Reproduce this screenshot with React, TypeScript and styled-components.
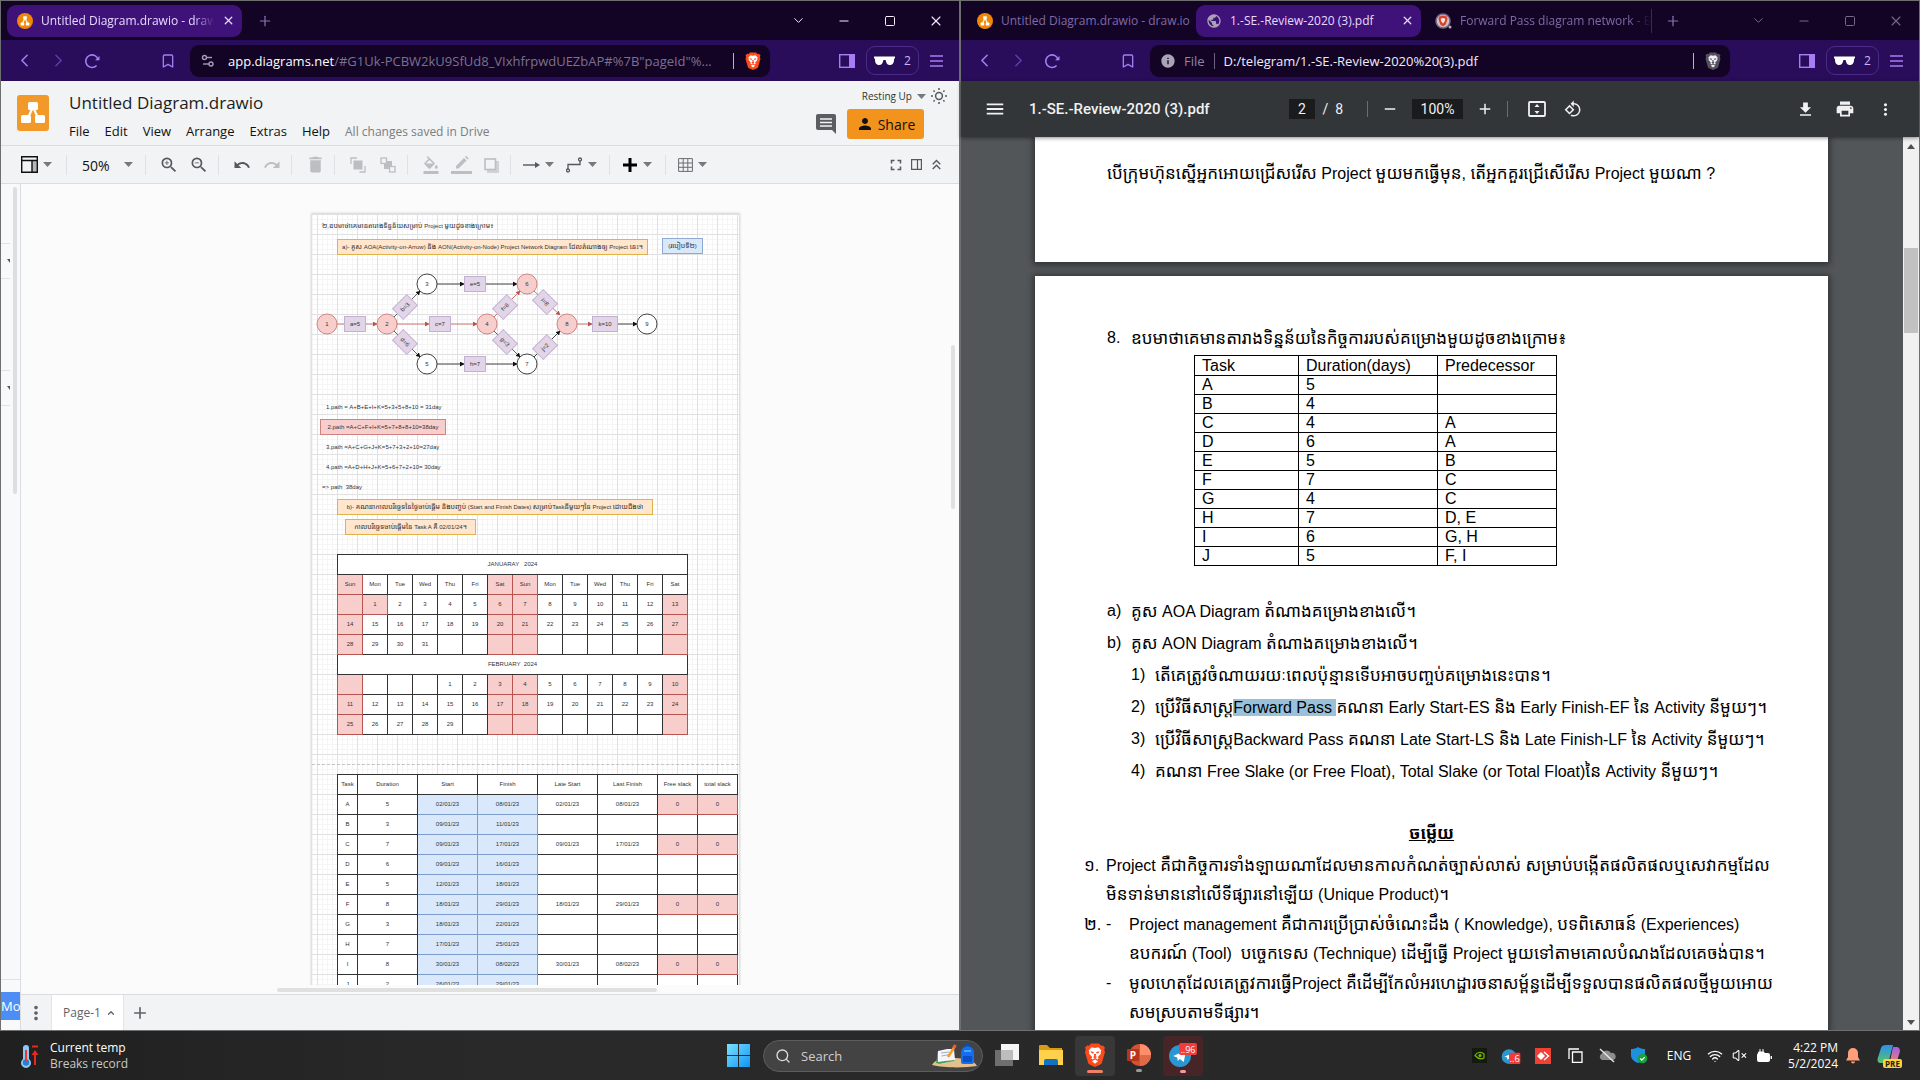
import React from "react";
import styled, { createGlobalStyle, css } from "styled-components";
import {
  MdZoomIn, MdZoomOut, MdUndo, MdRedo, MdDelete, MdFormatColorFill, MdPrint,
  MdFileDownload, MdRotate90DegreesCcw, MdMoreVert, MdMenu, MdAdd, MdRemove,
  MdFullscreen, MdKeyboardDoubleArrowUp, MdPerson, MdInfo, MdPublic,
} from "react-icons/md";
import { ChevronLeft, ChevronRight, ChevronDown, ChevronUp, Plus, Minus, X, Square, Bookmark, Wifi, VolumeX, Search } from "lucide-react";

const ui = `"Open Sans", "Noto Sans", sans-serif`;
const arial = `"Liberation Sans", "Noto Sans Khmer", "Khmer OS", sans-serif`;
const khmer = `"Khmer OS Content", "Khmer OS", "Noto Sans Khmer", "Liberation Sans", sans-serif`;

const GlobalStyle = createGlobalStyle`
  * { box-sizing: border-box; }
  html, body, #root { height: 100%; margin: 0; }
  body { font-family: ${ui}; overflow: hidden; background: #262626; }
  button, input, select { font: inherit; color: inherit; margin: 0; padding: 0; border: 0; background: none; outline: none; }
  button { display: inline-flex; align-items: center; justify-content: center; cursor: pointer; }
  svg { display: block; flex: none; }
`;

/* ---------- Shell ---------- */
const Desktop = styled.div`
  display: grid;
  grid-template-rows: minmax(0, 1fr) 49px;
  height: 100vh;
`;
const Windows = styled.div`
  display: grid;
  grid-template-columns: 1fr 1fr;
  min-height: 0;
`;
const Window = styled.section`
  display: flex;
  flex-direction: column;
  min-width: 0;
  min-height: 0;
  border: 1px solid #6f6f6f;
  background: #fff;
`;

/* ---------- Browser chrome ---------- */
const TabStrip = styled.div`
  display: flex;
  align-items: center;
  height: 39px;
  flex: none;
  padding-left: 6px;
  background: #130426;
  color: #8b74b4;
`;
const Tab = styled.div<{ $active?: boolean; $w: number }>`
  display: flex;
  align-items: center;
  gap: 8px;
  width: ${(p) => p.$w}px;
  height: 32px;
  padding: 0 ${(p) => (p.$active ? 7 : 0)}px 0 10px;
  border-radius: 9px;
  font-size: 12px;
  color: ${(p) => (p.$active ? "#e6daff" : "#7f6aa6")};
  background: ${(p) => (p.$active ? "#3f1279" : "transparent")};
`;
const TabTitle = styled.span<{ $fade?: boolean }>`
  flex: 1;
  min-width: 0;
  overflow: hidden;
  white-space: nowrap;
  ${(p) => p.$fade && css`mask-image: linear-gradient(90deg, #000 88%, transparent);`}
`;
const IconButton = styled.button<{ $w?: number; $h?: number; $c?: string }>`
  width: ${(p) => p.$w ?? 30}px;
  height: ${(p) => p.$h ?? 30}px;
  color: ${(p) => p.$c ?? "inherit"};
  flex: none;
`;
const TabDivider = styled.span`
  width: 1px;
  height: 24px;
  background: #3c2a55;
`;
const Spacer = styled.span`
  flex: 1;
`;
const WindowButtons = styled.div<{ $dim?: boolean }>`
  display: flex;
  color: ${(p) => (p.$dim ? "#75688a" : "#f2ecfb")};
`;
const NavBar = styled.div`
  display: flex;
  align-items: center;
  height: 41px;
  flex: none;
  padding: 0 9px 0 6px;
  background: #2a0d5a;
  color: #a77cf5;
`;
const Gap = styled.span<{ $w: number }>`
  width: ${(p) => p.$w}px;
  flex: none;
`;
const AddressBar = styled.div`
  display: flex;
  align-items: center;
  flex: 1;
  min-width: 0;
  height: 32px;
  margin-right: 62px;
  padding: 0 8px 0 10px;
  border-radius: 9px;
  background: #130426;
  color: #8e86a0;
  font-size: 13px;
`;
const Address = styled.div`
  flex: 1;
  min-width: 0;
  margin-left: 12px;
  white-space: nowrap;
  color: #7b728d;
  b { font-weight: 400; color: #fff; }
`;
const AddressInput = styled.input`
  flex: 1;
  min-width: 0;
  color: #f0ebf8;
`;
const Rule = styled.span<{ $c?: string; $m?: number }>`
  width: 1px;
  height: 16px;
  margin: 0 ${(p) => p.$m ?? 9}px;
  background: ${(p) => p.$c ?? "#b9b3c4"};
`;
const PrivateChip = styled.button`
  gap: 9px;
  width: 53px;
  height: 29px;
  margin: 0 3px 0 4px;
  border: 1px solid #4a2a86;
  border-radius: 9px;
  font-size: 12px;
  color: #cdb4ff;
`;

const BraveLion = ({ size, shield, face, mane }: { size: number; shield: string; face: string; mane: string }) => (
  <svg width={size} height={size} viewBox="0 0 24 24">
    <path d="M8 .5h8l2 2.200 2-.3 2 2.400-.8 2 .8 2.300-3 10.400c-.3 1-.9 1.500-1.600 2L12 24l-5.400-2.500c-.7-.5-1.300-1-1.600-2L2 9.100l.8-2.300-.8-2 2-2.400 2 .3z" fill={shield} />
    <path d="M8.600 4.300 12 4.900l3.400-.6 2.900 3.300-.7 1.700.3 1.400-3 3.300.7 1.600-.9.900-2.700-1.500-2.700 1.500-.9-.9.7-1.600-3-3.300.300-1.400-.7-1.700z" fill={face} />
    <path d="m9 18.200 3-1.700 3 1.700-3 2.500z" fill={face} />
    <path d="m7.300 8.300 3.500.6-.4 1.500-1.700-.2zM16.700 8.300l-3.500.6.400 1.500 1.700-.2zM10 14l1.300-.8-.5-2.200h2.400l-.5 2.200 1.300.8-2 1.500z" fill={mane} />
  </svg>
);
const DrawioBadge = () => (
  <svg width="16" height="16" viewBox="0 0 16 16">
    <circle cx="8" cy="8" r="8" fill="#f08705" />
    <path d="M8 5 5.6 10.5M8 5l2.4 5.5" stroke="#fff" strokeWidth="1.1" />
    <rect x="6.2" y="3.2" width="3.6" height="3" rx=".5" fill="#fff" />
    <rect x="3.6" y="9.4" width="3.6" height="3" rx=".5" fill="#fff" />
    <rect x="8.8" y="9.4" width="3.6" height="3" rx=".5" fill="#fff" />
  </svg>
);
const BraveSearchBadge = () => (
  <svg width="17" height="16" viewBox="0 0 17 16">
    <circle cx="8" cy="8" r="7" fill="#cfc3cb" stroke="#77697f" strokeWidth="1.500" />
    <path d="m8 2.500 3.800 1 .7 2.500-1.700 5.500L8 13.600l-2.800-2.100L3.500 6l.7-2.500z" fill="#d8432a" />
    <path d="m8 5 2.400.8-.8 2.800L8 10.500 6.400 8.600l-.8-2.800z" fill="#efe6ea" />
    <circle cx="15" cy="14" r="1.500" fill="#b8aec4" />
  </svg>
);
const ReloadIcon = () => (
  <svg width="16" height="16" viewBox="0 0 16 16" fill="none" stroke="currentColor" strokeWidth="1.6">
    <path d="M12.600 12.500A6.300 6.300 0 1 1 14.200 7" />
    <path d="M11 7.200h4.500V3z" fill="currentColor" stroke="none" />
  </svg>
);
const TuneIcon = () => (
  <svg width="16" height="16" viewBox="0 0 16 16" fill="none" stroke="#a39bb3" strokeWidth="1.4">
    <circle cx="4.500" cy="4.500" r="2" /><path d="M6.500 4.500H12" />
    <circle cx="11" cy="11" r="2" /><path d="M3 11h6" />
  </svg>
);
const PanelIcon = () => (
  <svg width="16" height="14" viewBox="0 0 16 14">
    <rect x=".7" y=".7" width="14.600" height="12.600" fill="none" stroke="#a77cf5" strokeWidth="1.4" />
    <rect x="10" y="1" width="5" height="12" fill="#a77cf5" />
  </svg>
);
const GlassesIcon = () => (
  <svg width="21" height="10" viewBox="0 0 21 10" fill="#fff">
    <path d="M0 .5h21v1.700l-.9.5c0 3.800-1.200 6.300-4.200 6.300-2.700 0-3.700-2-4.300-5h-2.200c-.6 3-1.600 5-4.300 5C2.100 9 .9 6.500.9 2.700L0 2.200z" />
  </svg>
);
const PillMenu = () => (
  <svg width="13" height="12" viewBox="0 0 13 12" stroke="currentColor" strokeWidth="1.500">
    <path d="M0 1h13M0 6h13M0 11h13" />
  </svg>
);

const WinControls = ({ dim }: { dim?: boolean }) => (
  <WindowButtons $dim={dim}>
    <IconButton $w={46} aria-label="Search tabs"><ChevronDown size={15} strokeWidth={1.6} /></IconButton>
    <IconButton $w={46} aria-label="Minimize"><Minus size={14} strokeWidth={1.8} /></IconButton>
    <IconButton $w={46} aria-label="Maximize"><Square size={12} strokeWidth={2} /></IconButton>
    <IconButton $w={46} aria-label="Close"><X size={16} strokeWidth={1.6} /></IconButton>
  </WindowButtons>
);

const Nav = ({ children, quiet }: { children: React.ReactNode; quiet?: boolean }) => (
  <NavBar>
    <IconButton $w={34} aria-label="Back"><ChevronLeft size={21} strokeWidth={1.8} /></IconButton>
    <IconButton $w={34} aria-label="Forward" $c="#6239a6"><ChevronRight size={21} strokeWidth={1.8} /></IconButton>
    <IconButton $w={34} aria-label="Reload"><ReloadIcon /></IconButton>
    <Gap $w={42} />
    <IconButton $w={34} aria-label="Bookmark this tab"><Bookmark size={16} strokeWidth={2} /></IconButton>
    <Gap $w={5} />
    <AddressBar>
      {children}
      <Rule $m={0} />
      <Gap $w={10} />
      {quiet
        ? <BraveLion size={18} shield="#55505f" face="#f1eff3" mane="#55505f" />
        : <BraveLion size={18} shield="#fb4a1c" face="#fff" mane="#fb4a1c" />}
    </AddressBar>
    <IconButton aria-label="Side panel"><PanelIcon /></IconButton>
    <PrivateChip><GlassesIcon />2</PrivateChip>
    <IconButton $w={28} aria-label="Menu"><PillMenu /></IconButton>
  </NavBar>
);

const Kh = styled.span<{ $size: number }>`
  font-family: ${khmer};
  font-size: ${(p) => p.$size}px;
`;
/* Text that mixes Latin with Khmer, which is set one size larger. */
const Mixed = ({ t, size = 17 }: { t: string; size?: number }) => (
  <>{t.split(/([\u1780-\u17ff]+)/).map((s, i) => (i % 2 ? <Kh key={i} $size={size}>{s}</Kh> : s))}</>
);

/* ---------- draw.io ---------- */
const DioHeader = styled.header`
  display: flex;
  height: 65px;
  flex: none;
  padding: 0 12px 0 16px;
  background: #f1f3f4;
  border-bottom: 1px solid #dadce0;
`;
const DioLogo = styled.div`
  width: 32px;
  height: 36px;
  margin: 14px 20px 0 0;
  border-radius: 3px;
  background: #f19a2a;
`;
const DioTitles = styled.div`
  flex: 1;
  padding-top: 10px;
`;
const DioTitle = styled.div`
  font-size: 17px;
  line-height: 24px;
  color: #1d1d1d;
`;
const MenuRow = styled.nav`
  display: flex;
  align-items: center;
  gap: 15px;
  height: 32px;
  font-size: 13px;
  color: #111;
`;
const Saved = styled.span`
  font-size: 12px;
  color: #7b7d80;
`;
const DioRight = styled.div`
  display: flex;
  flex-direction: column;
  align-items: flex-end;
`;
const AccountRow = styled.div`
  display: flex;
  align-items: center;
  gap: 5px;
  height: 30px;
  font-size: 10px;
  color: #333;
`;
const ShareRow = styled.div`
  display: flex;
  align-items: center;
  gap: 10px;
  margin-top: -2px;
  padding-right: 23px;
`;
const ShareButton = styled.button`
  gap: 4px;
  width: 77px;
  height: 30px;
  border-radius: 3px;
  background: #f2931e;
  font-size: 14px;
  color: #111;
`;
const DioToolbar = styled.div`
  display: flex;
  align-items: center;
  height: 38px;
  flex: none;
  padding: 0 13px 0 8px;
  background: #f1f3f4;
  border-bottom: 1px solid #dadce0;
  color: #55585c;
`;
const ToolGroup = styled.div<{ $last?: boolean; $dim?: boolean }>`
  display: flex;
  align-items: center;
  height: 20px;
  padding: 0 4px 0 8px;
  border-right: ${(p) => (p.$last ? 0 : 1)}px solid #dfe1e4;
  color: ${(p) => (p.$dim ? "#bcbec1" : "inherit")};
`;
const CaretButton = styled.button`
  justify-content: flex-start;
  gap: 5px;
  width: 43px;
  height: 30px;
  padding-left: 4px;
`;
const ZoomPicker = styled.label`
  display: grid;
  grid-template-columns: 66px;
  align-items: center;
  svg { grid-area: 1 / 1; justify-self: end; margin-right: 8px; pointer-events: none; }
`;
const ZoomSelect = styled.select`
  grid-area: 1 / 1;
  appearance: none;
  width: 100%;
  padding: 2px 0 0 7px;
  font-size: 14px;
  color: #111;
`;
const Caret = () => (
  <svg width="9" height="5" viewBox="0 0 9 5" fill="#77797c"><path d="M0 0h9L4.500 5z" /></svg>
);
const DioBody = styled.div`
  display: grid;
  grid-template-columns: 20px minmax(0, 1fr);
  flex: 1;
  min-height: 0;
`;
const ShapesPane = styled.aside`
  display: flex;
  flex-direction: column;
  justify-content: space-between;
  min-width: 0;
  overflow: hidden;
  background: #f8f9fa;
  border-right: 1px solid #dadce0;
`;
const ShapesUpper = styled.div`
  display: grid;
  grid-template-columns: 9px 1fr;
`;
const PaneSections = styled.div`
  display: flex;
  flex-direction: column;
`;
const PaneSection = styled.div<{ $h: number }>`
  display: flex;
  align-items: center;
  justify-content: flex-end;
  height: ${(p) => p.$h}px;
  border-bottom: 1px solid #e0e2e4;
`;
const PaneScroll = styled.div`
  width: 4px;
  height: 307px;
  margin: 3px 0 0 3px;
  border-radius: 2px;
  background: #dcdee1;
`;
const ShapesLower = styled.div`
  display: flex;
  flex-direction: column;
  padding: 12px 0 10px;
  border-top: 1px solid #e0e2e4;
`;
const MoreShapes = styled.button`
  justify-content: flex-start;
  height: 28px;
  background: #4d8df6;
  color: #fff;
  font-size: 13px;
  white-space: nowrap;
`;
const DioMain = styled.div`
  display: flex;
  flex-direction: column;
  min-width: 0;
  min-height: 0;
`;
const CanvasRow = styled.div`
  display: grid;
  grid-template-columns: minmax(0, 1fr) 13px;
  flex: 1;
  min-height: 0;
  background: #fbfbfb;
`;
const CanvasView = styled.div`
  display: flex;
  min-height: 0;
  overflow: hidden;
  padding: 30px 0 0 291px;
`;
const VThumb = styled.div`
  width: 4px;
  height: 164px;
  margin: 161px 0 0 5px;
  border-radius: 2px;
  background: #e0e0e0;
`;
const HScroll = styled.div`
  display: flex;
  height: 10px;
  flex: none;
  align-items: center;
  padding-left: 256px;
  background: #fbfbfb;
  border-bottom: 1px solid #dadce0;
`;
const HThumb = styled.div`
  width: 380px;
  height: 4px;
  border-radius: 2px;
  background: #e0e0e0;
`;
const Sheet = styled.div`
  position: relative;
  width: 427px;
  height: 1100px;
  flex: none;
  background-color: #fff;
  background-image:
    linear-gradient(90deg, #e1e1e1 1px, transparent 1px),
    linear-gradient(#e1e1e1 1px, transparent 1px),
    linear-gradient(90deg, #f5f5f5 1px, transparent 1px),
    linear-gradient(#f5f5f5 1px, transparent 1px);
  background-size: 20px 20px, 20px 20px, 5px 5px, 5px 5px;
  background-position: 5px 0, 0 0, 0 0, 0 0;
  box-shadow: 0 0 2px 1px #d3d3d3;
  font-family: ${arial};
  font-size: 6px;
  color: #333;
`;
/* An item dropped freely on the drawing sheet. */
const OnSheet = styled.div<{ $x: number; $y: number }>`
  position: absolute;
  left: ${(p) => p.$x}px;
  top: ${(p) => p.$y}px;
`;
const tones = {
  orange: ["#ffe6cc", "#dfb24a"],
  blue: ["#dae8fc", "#8faad1"],
  red: ["#f8cecc", "#cf8380"],
  none: ["transparent", "transparent"],
};
const NoteBox = styled(OnSheet)<{ $w: number; $tone: keyof typeof tones }>`
  display: flex;
  align-items: center;
  justify-content: ${(p) => (p.$tone === "none" ? "flex-start" : "center")};
  width: ${(p) => p.$w}px;
  height: 16px;
  padding: 0 4px;
  line-height: 14px;
  white-space: pre;
  background: ${(p) => tones[p.$tone][0]};
  border: 1px solid ${(p) => tones[p.$tone][1]};
`;
const Note = ({ x, y, w, tone = "none", t }: { x: number; y: number; w: number; tone?: keyof typeof tones; t: string }) => (
  <NoteBox $x={x} $y={y} $w={w} $tone={tone}><span><Mixed size={7} t={t} /></span></NoteBox>
);
const PageBreak = styled(OnSheet)`
  width: 427px;
  border-top: 1px dashed #c4c4c4;
`;
const SheetTable = styled.table`
  border-collapse: collapse;
  table-layout: fixed;
  background: #fff;
  text-align: center;
  td, th { height: 20px; padding: 0 0 2px; font-weight: 400; line-height: 8px; white-space: pre; border: 1px solid #333; }
`;
const Cell = styled.td<{ $fill?: "red" | "blue" }>`
  ${(p) => p.$fill === "red" && css`&& { background: #f8cecc; border-color: #b85450; }`}
  ${(p) => p.$fill === "blue" && css`&& { background: #dae8fc; border-color: #7c9ccc; }`}
`;

const red = "#b85450";
const nodes: [string, number, number, boolean][] = [
  ["1", 15, 110, true], ["2", 75, 110, true], ["3", 115, 70, false], ["5", 115, 150, false],
  ["4", 175, 110, true], ["6", 215, 70, true], ["7", 215, 150, false], ["8", 255, 110, true], ["9", 335, 110, false],
];
const edges: [number, number, number, number, string][] = [
  [25, 110, 65, 110, red], [85, 110, 117, 110, red], [138, 110, 165, 110, red],
  [125, 70, 152, 70, "#111"], [173, 70, 205, 70, "#111"], [125, 150, 152, 150, "#111"], [173, 150, 205, 150, "#111"],
  [82, 103, 108, 77, "#333"], [82, 117, 108, 143, "#333"], [182, 103, 208, 77, red], [182, 117, 208, 143, "#333"],
  [222, 77, 248, 101, red], [222, 143, 248, 117, "#111"], [265, 110, 280, 110, red], [305, 110, 325, 110, "#111"],
];
const labels: [string, number, number, number, number][] = [
  ["a=5", 43, 110, 21, 0], ["c=7", 128, 110, 21, 0], ["e=5", 163, 70, 21, 0], ["h=7", 163, 150, 21, 0], ["k=10", 293, 110, 25, 0],
  ["b=3", 93, 93, 20, -45], ["d=6", 93, 128, 20, 45], ["f=8", 193, 93, 20, -45], ["g=3", 193, 128, 20, 45],
  ["i=8", 233, 88, 20, 45], ["j=2", 233, 133, 20, -45],
];
const Network = () => (
  <svg width="360" height="170" viewBox="0 0 360 170" fontSize="6" textAnchor="middle">
    <defs>
      {[["r", red], ["k", "#111"]].map(([id, c]) => (
        <marker key={id} id={`tip-${id}`} markerUnits="userSpaceOnUse" markerWidth="5" markerHeight="5" refX="4" refY="2.500" orient="auto">
          <path d="M0 0 4.500 2.500 0 5z" fill={c} />
        </marker>
      ))}
    </defs>
    {edges.map(([a, b, c, d, s], i) => (
      <line key={i} x1={a} y1={b} x2={c} y2={d} stroke={s} strokeWidth=".8" markerEnd={`url(#tip-${s === red ? "r" : "k"})`} />
    ))}
    {nodes.map(([t, x, y, hot]) => (
      <g key={t}>
        <circle cx={x} cy={y} r="10" fill={hot ? "#f8cecc" : "#fff"} stroke={hot ? "#d08683" : "#444"} />
        <text x={x} y={y + 2} fill="#333">{t}</text>
      </g>
    ))}
    {labels.map(([t, x, y, w, r]) => (
      <g key={t} transform={`translate(${x} ${y}) rotate(${r})`}>
        <rect x={-w / 2} y="-7.500" width={w} height="15" fill="#e1d5e7" stroke="#c3b1d0" />
        <text y="2" fill="#333">{t}</text>
      </g>
    ))}
  </svg>
);

const jan = [
  ["Sun", "Mon", "Tue", "Wed", "Thu", "Fri", "Sat", "Sun", "Mon", "Tue", "Wed", "Thu", "Fri", "Sat"],
  ["", "1", "2", "3", "4", "5", "6", "7", "8", "9", "10", "11", "12", "13"],
  ["14", "15", "16", "17", "18", "19", "20", "21", "22", "23", "24", "25", "26", "27"],
  ["28", "29", "30", "31", "", "", "", "", "", "", "", "", "", ""],
];
const feb = [
  ["", "", "", "", "1", "2", "3", "4", "5", "6", "7", "8", "9", "10"],
  ["11", "12", "13", "14", "15", "16", "17", "18", "19", "20", "21", "22", "23", "24"],
  ["25", "26", "27", "28", "29", "", "", "", "", "", "", "", "", ""],
];
const isOff = (block: string, r: number, c: number) =>
  [0, 6, 7].includes(c) || (c === 13 && !(block === "jan" && r === 0)) || (block === "jan" && r === 1 && c === 1);
const MonthRows = ({ id, title, rows }: { id: string; title: string; rows: string[][] }) => (
  <tbody>
    <tr><th colSpan={14}>{title}</th></tr>
    {rows.map((row, r) => (
      <tr key={r}>{row.map((v, c) => <Cell key={c} $fill={isOff(id, r, c) ? "red" : undefined}>{v}</Cell>)}</tr>
    ))}
  </tbody>
);
const CalendarTable = styled(SheetTable)`
  width: 351px;
`;
const ScheduleTable = styled(SheetTable)`
  width: 401px;
`;
const schedule = [
  ["A", "5", "02/01/23", "08/01/23", "02/01/23", "08/01/23", "0", "0"],
  ["B", "3", "09/01/23", "11/01/23", "", "", "", ""],
  ["C", "7", "09/01/23", "17/01/23", "09/01/23", "17/01/23", "0", "0"],
  ["D", "6", "09/01/23", "16/01/23", "", "", "", ""],
  ["E", "5", "12/01/23", "18/01/23", "", "", "", ""],
  ["F", "8", "18/01/23", "29/01/23", "18/01/23", "29/01/23", "0", "0"],
  ["G", "3", "18/01/23", "22/01/23", "", "", "", ""],
  ["H", "7", "17/01/23", "25/01/23", "", "", "", ""],
  ["I", "8", "30/01/23", "08/02/23", "30/01/23", "08/02/23", "0", "0"],
  ["J", "2", "26/01/23", "29/01/23", "", "", "", ""],
];
const scheduleCols = [20, 60, 60, 60, 60, 60, 40, 40];
const Col = styled.col<{ $w: number }>`
  width: ${(p) => p.$w}px;
`;
const fillFor = (v: string, c: number) => (c === 2 || c === 3 ? "blue" : c > 5 && v ? "red" : undefined);

const DioFooter = styled.footer`
  display: flex;
  align-items: center;
  height: 35px;
  flex: none;
  background: #f1f3f4;
  color: #5f6368;
`;
const PageTab = styled.button`
  gap: 5px;
  width: 73px;
  height: 35px;
  padding-left: 4px;
  background: #fff;
  border: solid #e2e4e6;
  border-width: 0 1px;
  font-size: 12px;
`;

const OrderIcon = ({ back }: { back?: boolean }) => (
  <svg width="16" height="16" viewBox="0 0 16 16" fill="none" stroke="currentColor" strokeWidth="1.300">
    {back ? (
      <><rect x="4" y="4" width="8" height="8" fill="currentColor" stroke="none" /><rect x="1" y="1" width="5.500" height="5.500" fill="#f1f3f4" /><rect x="9.500" y="9.500" width="5.500" height="5.500" fill="#f1f3f4" /></>
    ) : (
      <><rect x="3.500" y="3.500" width="9" height="9" fill="currentColor" stroke="none" /><path d="M7 1H1v6M9.500 15H15V9" /></>
    )}
  </svg>
);
const PenIcon = () => (
  <svg width="21" height="20" viewBox="0 0 21 20" fill="currentColor">
    <path d="m5 11 8-8 2.600 2.600-8 8H5zM14 2l1.200-1.200 2.600 2.600L16.600 4.600zM0 16h21v3H0z" />
  </svg>
);

const DioWindow = () => (
  <Window>
    <TabStrip>
      <Tab $active $w={235}>
        <DrawioBadge />
        <TabTitle $fade>Untitled Diagram.drawio - draw.</TabTitle>
        <X size={13} strokeWidth={2.4} />
      </Tab>
      <IconButton $w={46} aria-label="New tab"><Plus size={16} strokeWidth={1.8} /></IconButton>
      <Spacer />
      <WinControls />
    </TabStrip>
    <Nav>
      <TuneIcon />
      <Address><b>app.diagrams.net</b>/#G1Uk-PCBW2kU9SfUd8_VIxhfrpwdUEZbAP#%7B"pageId"%...</Address>
    </Nav>
    <DioHeader>
      <DioLogo>
        <svg width="32" height="36" viewBox="0 0 32 36">
          <path d="m16 12-6 13M16 12l6 13" stroke="#fff" strokeWidth="2.200" />
          <rect x="11" y="7" width="10" height="8" rx="1.500" fill="#fff" />
          <rect x="4" y="20" width="10" height="8" rx="1.500" fill="#fff" />
          <rect x="18" y="20" width="10" height="8" rx="1.500" fill="#fff" />
        </svg>
      </DioLogo>
      <DioTitles>
        <DioTitle>Untitled Diagram.drawio</DioTitle>
        <MenuRow>
          {["File", "Edit", "View", "Arrange", "Extras", "Help"].map((m) => <button key={m}>{m}</button>)}
          <Saved>All changes saved in Drive</Saved>
        </MenuRow>
      </DioTitles>
      <DioRight>
        <AccountRow>
          Resting Up <Caret />
          <svg width="16" height="16" viewBox="0 0 16 16" fill="none" stroke="#55585c" strokeWidth="1.500">
            <circle cx="8" cy="8" r="3.400" />
            <path d="M8 0v2M8 14v2M0 8h2M14 8h2M2.500 2.500l1.200 1.200M12.300 12.300l1.200 1.200M2.500 13.500l1.200-1.200M12.300 3.700l1.200-1.200" />
          </svg>
        </AccountRow>
        <ShareRow>
          <IconButton $w={22} aria-label="Comments">
            <svg width="20" height="20" viewBox="0 0 20 20">
              <path d="M2 0h16a2 2 0 0 1 2 2v18l-4-4H2a2 2 0 0 1-2-2V2a2 2 0 0 1 2-2z" fill="#5a5d61" />
              <path d="M4 5h12M4 8.500h12M4 12h12" stroke="#f1f3f4" strokeWidth="1.600" />
            </svg>
          </IconButton>
          <ShareButton><MdPerson size={18} />Share</ShareButton>
        </ShareRow>
      </DioRight>
    </DioHeader>
    <DioToolbar>
      <ToolGroup>
        <CaretButton aria-label="Panels">
          <svg width="17" height="17" viewBox="0 0 17 17">
            <rect x="11" y="5" width="5" height="11" fill="#b5b7b9" />
            <path d="M.7.700h15.600v15.600H.7zM.7 4.500h15.600M11 4.500v12" fill="none" stroke="#111" strokeWidth="1.400" />
          </svg>
          <Caret />
        </CaretButton>
        <Gap $w={2} />
      </ToolGroup>
      <ToolGroup>
        <ZoomPicker>
          <ZoomSelect aria-label="Zoom" defaultValue="50%"><option>50%</option><option>100%</option></ZoomSelect>
          <Caret />
        </ZoomPicker>
      </ToolGroup>
      <ToolGroup>
        <IconButton aria-label="Zoom in"><MdZoomIn size={20} /></IconButton>
        <IconButton aria-label="Zoom out"><MdZoomOut size={20} /></IconButton>
      </ToolGroup>
      <ToolGroup>
        <IconButton aria-label="Undo"><MdUndo size={18} /></IconButton>
        <IconButton aria-label="Redo" $c="#bcbec1"><MdRedo size={18} /></IconButton>
      </ToolGroup>
      <ToolGroup $dim><IconButton aria-label="Delete"><MdDelete size={21} /></IconButton></ToolGroup>
      <ToolGroup $dim>
        <IconButton aria-label="To front"><OrderIcon /></IconButton>
        <IconButton aria-label="To back"><OrderIcon back /></IconButton>
      </ToolGroup>
      <ToolGroup $dim>
        <IconButton aria-label="Fill colour"><MdFormatColorFill size={18} /></IconButton>
        <IconButton aria-label="Line colour"><PenIcon /></IconButton>
        <IconButton aria-label="Shadow">
          <svg width="16" height="16" viewBox="0 0 16 16"><path d="M4 4h12v12H4z" fill="#d0d2d4" /><rect x="2" y="2" width="10.500" height="10.500" fill="#f1f3f4" stroke="#bcbec1" strokeWidth="1.600" /></svg>
        </IconButton>
      </ToolGroup>
      <ToolGroup>
        <CaretButton aria-label="Connection">
          <svg width="17" height="8" viewBox="0 0 17 8"><path d="M0 4h13" stroke="#55585c" strokeWidth="1.400" /><path d="m12 1 5 3-5 3z" fill="#55585c" /></svg>
          <Caret />
        </CaretButton>
        <CaretButton aria-label="Waypoints">
          <svg width="17" height="16" viewBox="0 0 17 16" fill="none" stroke="#55585c" strokeWidth="1.300"><path d="M2 12V7.500h12V4" /><circle cx="2" cy="13.500" r="1.500" /><circle cx="14" cy="2.500" r="1.500" /></svg>
          <Caret />
        </CaretButton>
      </ToolGroup>
      <ToolGroup>
        <CaretButton aria-label="Insert">
          <svg width="16" height="14" viewBox="0 0 16 14"><path d="M8 0v14M1 7h14" stroke="#000" strokeWidth="3" /></svg>
          <Caret />
        </CaretButton>
      </ToolGroup>
      <ToolGroup $last>
        <CaretButton aria-label="Table">
          <svg width="15" height="14" viewBox="0 0 15 14"><path d="M.6.600h13.800v12.800H.6zM.6 5h13.800M.6 9.300h13.800M5.200.600v12.800M9.800.600v12.800" fill="none" stroke="#6a6d70" /></svg>
          <Caret />
        </CaretButton>
      </ToolGroup>
      <Spacer />
      <IconButton $w={20} aria-label="Fullscreen"><MdFullscreen size={18} /></IconButton>
      <IconButton $w={20} aria-label="Format">
        <svg width="11" height="11" viewBox="0 0 11 11"><path d="M.6.600h9.800v9.800H.6zM6.500.600v9.800" fill="none" stroke="#55585c" strokeWidth="1.200" /></svg>
      </IconButton>
      <IconButton $w={20} aria-label="Collapse"><MdKeyboardDoubleArrowUp size={17} /></IconButton>
    </DioToolbar>
    <DioBody>
      <ShapesPane>
        <ShapesUpper>
          <PaneSections>
            <PaneSection $h={60} />
            <PaneSection $h={35}><svg width="3" height="4" viewBox="0 0 3 4"><path d="M0 0h3v4z" fill="#55585c" /></svg></PaneSection>
            <PaneSection $h={92} />
            <PaneSection $h={35}><svg width="3" height="4" viewBox="0 0 3 4"><path d="M0 0h3v4z" fill="#55585c" /></svg></PaneSection>
          </PaneSections>
          <PaneScroll />
        </ShapesUpper>
        <ShapesLower><MoreShapes>Mor</MoreShapes></ShapesLower>
      </ShapesPane>
      <DioMain>
        <CanvasRow>
          <CanvasView>
            <Sheet>
              <Note x={5} y={4} w={200} t="២,ឧបមាថាគេមានតារាងទិន្នន័យសម្រាប់ Project មួយដូចខាងក្រោម៖" />
              <Note x={25} y={25} w={311} tone="orange" t="a)- គូស AOA(Activity-on-Arrow) និង AON(Activity-on-Node) Project Network Diagram ដែលតំណាងឲ្យ Project នេះ។" />
              <Note x={350} y={24} w={41} tone="blue" t="(របៀបទី២)" />
              <OnSheet $x={0} $y={0}><Network /></OnSheet>
              <Note x={9} y={185} w={126} t="1.path = A+B+E+I+K=5+3+5+8+10 = 31day" />
              <Note x={8} y={205} w={126} tone="red" t="2.path =A+C+F+I+K=5+7+8+8+10=38day" />
              <Note x={9} y={225} w={126} t="3.path =A+C+G+J+K=5+7+3+2+10=27day" />
              <Note x={9} y={245} w={126} t="4.path =A+D+H+J+K=5+6+7+2+10= 30day" />
              <Note x={5} y={265} w={60} t="=> path  38day" />
              <Note x={25} y={285} w={316} tone="orange" t="b)- គណនាកាលបរិច្ឆេទនៃថ្ងៃចាប់ផ្ដើម និងបញ្ចប់ (Start and Finish Dates) សម្រាប់Taskនីមួយៗនៃ Project ដោយដឹងថា" />
              <Note x={33} y={305} w={131} tone="orange" t="កាលបរិច្ឆេទចាប់ផ្ដើមនៃ Task A គឺ 02/01/24។" />
              <OnSheet $x={25} $y={340}>
                <CalendarTable>
                  <MonthRows id="jan" title="JANUARAY   2024" rows={jan} />
                  <MonthRows id="feb" title="FEBRUARY  2024" rows={feb} />
                </CalendarTable>
              </OnSheet>
              <PageBreak $x={0} $y={550} />
              <OnSheet $x={25} $y={560}>
                <ScheduleTable>
                  <colgroup>{scheduleCols.map((w, i) => <Col key={i} $w={w} />)}</colgroup>
                  <thead><tr>{["Task", "Duration", "Start", "Finish", "Late Start", "Last Finish", "Free slack", "total slack"].map((h) => <th key={h}>{h}</th>)}</tr></thead>
                  <tbody>
                    {schedule.map((row) => (
                      <tr key={row[0]}>{row.map((v, c) => <Cell key={c} $fill={fillFor(v, c)}>{v}</Cell>)}</tr>
                    ))}
                  </tbody>
                </ScheduleTable>
              </OnSheet>
            </Sheet>
          </CanvasView>
          <VThumb />
        </CanvasRow>
        <HScroll><HThumb /></HScroll>
        <DioFooter>
          <IconButton $w={30} aria-label="Pages"><MdMoreVert size={22} /></IconButton>
          <PageTab>Page-1 <ChevronUp size={10} strokeWidth={3} /></PageTab>
          <IconButton $w={32} aria-label="Insert page"><Plus size={18} strokeWidth={2.200} /></IconButton>
        </DioFooter>
      </DioMain>
    </DioBody>
  </Window>
);

/* ---------- PDF viewer ---------- */
const PdfBar = styled.header`
  display: flex;
  align-items: center;
  height: 56px;
  flex: none;
  padding: 0 14px 0 10px;
  background: #323639;
  color: #f1f1f1;
  font-family: Roboto, sans-serif;
  font-size: 14px;
  z-index: 1;
  box-shadow: 0 1px 4px rgba(0, 0, 0, 0.45);
`;
const PdfName = styled.span`
  width: 261px;
  padding-left: 10px;
  font-size: 15px;
  font-weight: 500;
`;
const PdfField = styled.input<{ $w: number }>`
  width: ${(p) => p.$w}px;
  height: 20px;
  background: #191b1c;
  text-align: center;
`;
const PageCount = styled.span`
  width: 52px;
  padding-left: 4px;
  white-space: pre;
`;
const PdfView = styled.div`
  display: grid;
  grid-template-columns: minmax(0, 1fr) 16px;
  flex: 1;
  min-height: 0;
  background: #525659;
`;
const PdfScroll = styled.div`
  display: flex;
  flex-direction: column;
  align-items: center;
  gap: 14px;
  min-height: 0;
  overflow: hidden;
  padding-right: 1px;
`;
const Paper = styled.article<{ $end?: boolean }>`
  width: 793px;
  flex: none;
  padding: ${(p) => (p.$end ? "20px 72px 73px" : "46px 40px 60px 49px")};
  background: #fff;
  box-shadow: 0 1px 6px 2px rgba(0, 0, 0, 0.4);
  font-family: ${arial};
  font-size: 16px;
  color: #000;
`;
const PdfTrack = styled.div`
  display: flex;
  flex-direction: column;
  align-items: center;
  background: #f1f1f1;
  padding: 7px 0 5px;
`;
const PdfThumb = styled.div`
  width: 14px;
  height: 85px;
  margin: 99px 0 auto;
  background: #c1c1c1;
`;
const Line = styled.div<{ $indent?: number }>`
  display: grid;
  grid-template-columns: 24px 1fr;
  height: 32px;
  line-height: 32px;
  padding-left: ${(p) => p.$indent ?? 23}px;
  white-space: pre;
`;
const PlainLine = styled.div`
  height: 32px;
  line-height: 32px;
  white-space: pre;
`;
const Questions = styled.div`
  margin: 29px 0 30px;
`;
const TaskTable = styled.table`
  width: 363px;
  margin: 1px 0 0 110px;
  border-collapse: collapse;
  table-layout: fixed;
  th, td { height: 19px; padding: 0 0 0 7px; border: 1px solid #000; text-align: left; font-weight: 400; line-height: 18px; }
  th { height: 20px; line-height: 19px; }
`;
const Heading = styled.h2`
  margin: 0 0 0 -9px;
  height: 33px;
  line-height: 31px;
  text-align: center;
  font-size: 16px;
  font-weight: 700;
  text-decoration: underline;
`;
const Answer = styled.div<{ $dash?: boolean }>`
  display: grid;
  grid-template-columns: ${(p) => (p.$dash ? "22px 23px 1fr" : "22px 1fr")};
  margin-bottom: 1px;
  line-height: 29px;
  white-space: pre;
`;
const AnswerLine = styled.div`
  height: 29px;
`;
const Selected = styled.mark`
  background: #99c1da;
  color: inherit;
`;

const tasks = [
  ["A", "5", ""], ["B", "4", ""], ["C", "4", "A"], ["D", "6", "A"], ["E", "5", "B"],
  ["F", "7", "C"], ["G", "4", "C"], ["H", "7", "D, E"], ["I", "6", "G, H"], ["J", "5", "F, I"],
];
const answers = [
  { mark: "១.", lines: ["Project គឺជាកិច្ចការទាំងឡាយណាដែលមានកាលកំណត់ច្បាស់លាស់ សម្រាប់បង្កើតផលិតផលឬសេវាកម្មដែល", "មិនទាន់មាននៅលើទីផ្សារនៅឡើយ (Unique Product)។"] },
  { mark: "២.", dash: true, lines: ["Project management គឺជាការប្រើប្រាស់ចំណេះដឹង ( Knowledge), បទពិសោធន៍ (Experiences)", "ឧបករណ៍ (Tool)  បច្ចេកទេស (Technique) ដើម្បីធ្វើ Project មួយទៅតាមគោលបំណងដែលគេចង់បាន។"] },
  { mark: "", dash: true, lines: ["មូលហេតុដែលគេត្រូវការធ្វើProject គឺដើម្បីកែលំអរហេដ្ឋារចនាសម្ព័ន្ធដើម្បីទទួលបានផលិតផលថ្មីមួយអោយ", "សមស្របតាមទីផ្សារ។"] },
];

const PdfWindow = () => (
  <Window>
    <TabStrip>
      <Tab $w={229}><DrawioBadge /><TabTitle>Untitled Diagram.drawio - draw.io</TabTitle></Tab>
      <Tab $active $w={225}><MdPublic size={16} color="#a9a3b5" /><TabTitle>1.-SE.-Review-2020 (3).pdf</TabTitle><X size={13} strokeWidth={2.400} /></Tab>
      <Gap $w={4} />
      <Tab $w={226}><BraveSearchBadge /><TabTitle $fade>Forward Pass diagram network - B</TabTitle></Tab>
      <TabDivider />
      <IconButton $w={42} aria-label="New tab"><Plus size={16} strokeWidth={1.800} /></IconButton>
      <Spacer />
      <WinControls dim />
    </TabStrip>
    <Nav quiet>
      <MdInfo size={16} color="#a9a3b5" />
      <Gap $w={8} />File<Rule $c="#6c647b" />
      <AddressInput aria-label="Address" defaultValue="D:/telegram/1.-SE.-Review-2020%20(3).pdf" />
    </Nav>
    <PdfBar>
      <IconButton $w={48} aria-label="Menu"><MdMenu size={22} /></IconButton>
      <PdfName>1.-SE.-Review-2020 (3).pdf</PdfName>
      <Gap $w={9} />
      <PdfField $w={26} aria-label="Page" defaultValue="2" />
      <PageCount>{" /  8"}</PageCount>
      <Rule $m={0} $c="#6b6e70" />
      <IconButton $w={44} aria-label="Zoom out"><MdRemove size={18} /></IconButton>
      <PdfField $w={51} aria-label="Zoom" defaultValue="100%" />
      <IconButton $w={44} aria-label="Zoom in"><MdAdd size={18} /></IconButton>
      <Rule $m={0} $c="#6b6e70" />
      <Gap $w={12} />
      <IconButton $w={34} aria-label="Fit to page">
        <svg width="18" height="16" viewBox="0 0 18 16" fill="none" stroke="#f1f1f1" strokeWidth="1.800"><rect x="1" y="1" width="16" height="14" rx="1" /><path d="M9 3 6.500 6h5zM9 13l2.500-3h-5z" fill="#f1f1f1" stroke="none" /></svg>
      </IconButton>
      <IconButton $w={38} aria-label="Rotate"><MdRotate90DegreesCcw size={18} /></IconButton>
      <Spacer />
      <IconButton $w={40} aria-label="Download"><MdFileDownload size={19} /></IconButton>
      <IconButton $w={40} aria-label="Print"><MdPrint size={20} /></IconButton>
      <IconButton $w={40} aria-label="More"><MdMoreVert size={19} /></IconButton>
    </PdfBar>
    <PdfView>
      <PdfScroll>
        <Paper $end>
          <PlainLine><Mixed t="បើក្រុមហ៊ុនស្នើអ្នកអោយជ្រើសរើស Project មួយមកធ្វើមុន, តើអ្នកគួរជ្រើសើរើស Project មួយណា ?" /></PlainLine>
        </Paper>
        <Paper>
          <Line><span>8.</span><span><Mixed t="ឧបមាថាគេមានតារាងទិន្នន័យនៃកិច្ចការរបស់គម្រោងមួយដូចខាងក្រោម៖" /></span></Line>
          <TaskTable>
            <colgroup><Col $w={104} /><Col $w={139} /><Col $w={119} /></colgroup>
            <thead><tr><th>Task</th><th>Duration(days)</th><th>Predecessor</th></tr></thead>
            <tbody>{tasks.map((r) => <tr key={r[0]}>{r.map((v, i) => <td key={i}>{v}</td>)}</tr>)}</tbody>
          </TaskTable>
          <Questions>
            <Line><span>a)</span><span><Mixed t="គូស AOA Diagram តំណាងគម្រោងខាងលើ។" /></span></Line>
            <Line><span>b)</span><span><Mixed t="គូស AON Diagram តំណាងគម្រោងខាងលើ។" /></span></Line>
            <Line $indent={47}><span>1)</span><span><Mixed t="តើគេត្រូវចំណាយរយៈពេលប៉ុន្មានទើបអាចបញ្ចប់គម្រោងនេះបាន។" /></span></Line>
            <Line $indent={47}><span>2)</span><span><Mixed t="ប្រើវិធីសាស្ត្រ" /><Selected>Forward Pass </Selected><Mixed t="គណនា Early Start-ES និង Early Finish-EF នៃ Activity នីមួយៗ។" /></span></Line>
            <Line $indent={47}><span>3)</span><span><Mixed t="ប្រើវិធីសាស្ត្រBackward Pass គណនា Late Start-LS និង Late Finish-LF នៃ Activity នីមួយៗ។" /></span></Line>
            <Line $indent={47}><span>4)</span><span><Mixed t="គណនា Free Slake (or Free Float), Total Slake (or Total Float)នៃ Activity នីមួយៗ។" /></span></Line>
          </Questions>
          <Heading><Mixed t="ចម្លើយ" /></Heading>
          {answers.map((a, i) => (
            <Answer key={i} $dash={a.dash}>
              <span><Mixed t={a.mark} /></span>
              {a.dash && <span>-</span>}
              <div>{a.lines.map((l) => <AnswerLine key={l}><Mixed t={l} /></AnswerLine>)}</div>
            </Answer>
          ))}
        </Paper>
      </PdfScroll>
      <PdfTrack>
        <svg width="8" height="5" viewBox="0 0 8 5"><path d="M4 0 8 5H0z" fill="#505050" /></svg>
        <PdfThumb />
        <svg width="8" height="5" viewBox="0 0 8 5"><path d="M0 0h8L4 5z" fill="#505050" /></svg>
      </PdfTrack>
    </PdfView>
  </Window>
);

/* ---------- Taskbar ---------- */
const Bar = styled.footer`
  display: grid;
  grid-template-columns: 1fr auto 1fr;
  align-items: center;
  padding: 0 14px 0 20px;
  background: linear-gradient(90deg, #202020, #292929 25%, #282828);
  color: #fff;
  font-size: 12px;
`;
const Weather = styled.button`
  justify-self: start;
  gap: 10px;
  text-align: left;
`;
const TwoLines = styled.span`
  display: block;
  line-height: 16px;
  small { display: block; font-size: 12px; color: #c9c9c9; }
`;
const Apps = styled.div`
  display: flex;
  align-items: center;
  margin-left: 4px;
`;
const SearchPill = styled.label`
  display: flex;
  align-items: center;
  gap: 10px;
  width: 220px;
  height: 32px;
  margin: 0 0 0 13px;
  padding: 0 5px 0 11px;
  border: 1px solid #5c5c5c;
  border-radius: 16px;
  background: #434343;
  font-size: 13px;
  input { flex: 1; min-width: 0; }
  input::placeholder { color: #cfcfcf; opacity: 1; }
`;
const AppButton = styled.button<{ $bg?: string; $dot?: string; $dw?: number }>`
  flex-direction: column;
  gap: 3px;
  width: 40px;
  height: 40px;
  margin-left: 4px;
  padding-top: 5px;
  border-radius: 4px;
  background: ${(p) => p.$bg ?? "none"};
  &::after { content: ""; width: ${(p) => p.$dw ?? 6}px; height: 3px; border-radius: 2px; background: ${(p) => p.$dot ?? "transparent"}; }
`;
const Tray = styled.div`
  display: flex;
  align-items: center;
  justify-content: flex-end;
`;
const TrayIcon = styled.button<{ $w?: number }>`
  width: ${(p) => p.$w ?? 32}px;
  height: 32px;
`;
const Clock = styled.button`
  justify-content: flex-end;
  width: 61px;
  line-height: 16px;
  text-align: right;
`;

const TelegramIcon = ({ size, badge }: { size: number; badge: string }) => (
  <svg width={size + 4} height={size} viewBox="0 0 28 24">
    <circle cx="11" cy="13" r="11" fill="#2a97d0" />
    <path d="m4 13 13-5.500-2.200 11.500-4-3-2 2-.6-3.600z" fill="#fff" />
    <rect x={badge.length > 3 ? 10 : 11} y={badge.length > 3 ? 0 : 7} width={badge.length > 3 ? 18 : 17} height={badge.length > 3 ? 12 : 17} rx="2" fill="#f23b3b" />
    <text x={badge.length > 3 ? 19 : 19.500} y={badge.length > 3 ? 9.500 : 20.500} fontSize={badge.length > 3 ? 9 : 14} fill="#fff" textAnchor="middle">{badge}</text>
  </svg>
);

const Taskbar = () => (
  <Bar>
    <Weather>
      <svg width="20" height="24" viewBox="0 0 20 24">
        <path d="M6 1a3 3 0 0 1 3 3v11a5 5 0 1 1-6 0V4a3 3 0 0 1 3-3z" fill="#8cc8f5" />
        <circle cx="6" cy="18.500" r="3.200" fill="#2a7fd4" /><path d="M6 6v12" stroke="#e8382c" strokeWidth="2" />
        <path d="M12 2.500h6M15 21V9" stroke="#e8281c" strokeWidth="2" /><path d="M11.500 11 15 6l3.500 5z" fill="#e8281c" />
      </svg>
      <TwoLines>Current temp<small>Breaks record</small></TwoLines>
    </Weather>
    <Apps>
      <IconButton $w={23} aria-label="Start">
        <svg width="23" height="23" viewBox="0 0 23 23">
          <defs><linearGradient id="win" x1="0" y1="0" x2="1" y2="1"><stop stopColor="#7be0ff" /><stop offset="1" stopColor="#0f95f5" /></linearGradient></defs>
          <path d="M0 0h11v11H0zM12 0h11v11H12zM0 12h11v11H0zM12 12h11v11H12z" fill="url(#win)" />
        </svg>
      </IconButton>
      <SearchPill>
        <Search size={16} color="#dcdcdc" />
        <input aria-label="Search" placeholder="Search" />
        <svg width="45" height="25" viewBox="0 0 45 25">
          <path d="M0 22c3-6 11-7 20-7 13 0 22 2 25 8-12 2-34 2-45-1z" fill="#e4c08c" />
          <path d="m6 8 9-2 7 0 1 11-9 3-9 1z" fill="#f4f6fa" /><path d="m6 8-2 12 3 1 15-3 1-1-10 1-7 1z" fill="#4b9b62" />
          <path d="m9 10 8-1M9.500 13l8-1.500" stroke="#9fb0c6" /><path d="m16 14 7-11" stroke="#f59a2a" strokeWidth="2.500" /><path d="m21.500 5 2-3" stroke="#e85b4a" strokeWidth="3" />
          <path d="M29 10c0-9 13-9 13 0v9a2 2 0 0 1-2 2h-9a2 2 0 0 1-2-2z" fill="#146ff0" /><path d="M33 4c0-4 5-4 5 0" fill="none" stroke="#0d4fb0" strokeWidth="1.600" /><path d="M31 13h9v6h-9z" fill="#0b4fc4" /><path d="M32 8h7" stroke="#5fb4ff" strokeWidth="1.500" />
        </svg>
      </SearchPill>
      <AppButton aria-label="Task view">
        <svg width="24" height="22" viewBox="0 0 24 22"><path d="M0 6h18v16H0z" fill="#6f6f6f" /><path d="M6 0h18v16H6z" fill="#f5f5f5" /><path d="M6 6h12v10H6z" fill="#bdbdbd" /></svg>
      </AppButton>
      <AppButton aria-label="File Explorer">
        <svg width="24" height="22" viewBox="0 0 24 22"><path d="M0 2a1 1 0 0 1 1-1h7l3 3h12v6H0z" fill="#d99a16" /><path d="M0 6h24v15H0z" fill="#ffd04a" /><path d="M5 21v-4a2 2 0 0 1 2-2h10a2 2 0 0 1 2 2v4z" fill="#1273c4" /></svg>
      </AppButton>
      <AppButton $bg="#383838" $dot="#f08066" $dw={16} aria-label="Brave"><BraveLion size={24} shield="#fb4a1c" face="#fff" mane="#fb4a1c" /></AppButton>
      <AppButton $dot="#9a9a9a" aria-label="PowerPoint">
        <svg width="24" height="22" viewBox="0 0 24 22"><circle cx="13" cy="11" r="11" fill="#d35230" /><path d="M13 0a11 11 0 0 1 11 11H13z" fill="#ff8f6b" /><path d="M13 11h11a11 11 0 0 1-11 11z" fill="#e06a48" /><rect y="5" width="12" height="12" rx="1" fill="#b7341a" /><text x="6" y="14.500" fontSize="10" fontWeight="700" fill="#fff" textAnchor="middle">P</text></svg>
      </AppButton>
      <AppButton $bg="#472526" $dot="#f09aa8" aria-label="Telegram"><TelegramIcon size={24} badge="..96" /></AppButton>
    </Apps>
    <Tray>
      <TrayIcon aria-label="NVIDIA"><svg width="15" height="15" viewBox="0 0 15 15"><rect width="15" height="15" fill="#141a10" /><path d="M3 7.500c2-3.500 6-4 9-1.500v4c-3 1.500-6 1-9-2.500z" fill="none" stroke="#76b900" strokeWidth="1.200" /><circle cx="8" cy="7.500" r="1.600" fill="#76b900" /></svg></TrayIcon>
      <TrayIcon aria-label="Telegram"><TelegramIcon size={16} badge="..6" /></TrayIcon>
      <TrayIcon aria-label="AnyDesk"><svg width="16" height="16" viewBox="0 0 16 16"><rect width="16" height="16" fill="#ef4136" /><path d="m6 4 4 4-4 4-4-4z" fill="#fff" /><path d="m9 4 4.500 4L9 12" fill="none" stroke="#fff" strokeWidth="1.400" /></svg></TrayIcon>
      <TrayIcon aria-label="Clipboard"><svg width="15" height="15" viewBox="0 0 15 15" fill="none" stroke="#fff" strokeWidth="1.300"><path d="M4.500 4h9.500v10.300H4.500z" /><path d="M1 11V1h10" /></svg></TrayIcon>
      <TrayIcon aria-label="OneDrive"><svg width="18" height="15" viewBox="0 0 18 15"><path d="M4 12a3.500 3.500 0 0 1 0-6.500 5 5 0 0 1 9-.5 3.500 3.500 0 0 1 2 7z" fill="#8d8d8d" /><path d="m2 1 14 13" stroke="#e8e8e8" strokeWidth="1.400" /></svg></TrayIcon>
      <TrayIcon aria-label="Security"><svg width="18" height="17" viewBox="0 0 18 17"><path d="M8 0c2 1.500 4.500 2 7 2v6c0 4-3 6.500-7 8-4-1.500-7-4-7-8V2c2.500 0 5-.5 7-2z" fill="#1f8fe0" /><circle cx="12.500" cy="11.500" r="4.800" fill="#18a33f" /><path d="m10.300 11.500 1.600 1.600 2.800-3" fill="none" stroke="#fff" strokeWidth="1.300" /></svg></TrayIcon>
      <TrayIcon $w={48}>ENG</TrayIcon>
      <TrayIcon $w={24} aria-label="Wi-Fi"><Wifi size={16} /></TrayIcon>
      <TrayIcon $w={24} aria-label="Muted"><VolumeX size={15} strokeWidth={1.700} /></TrayIcon>
      <TrayIcon $w={26} aria-label="Battery"><svg width="16" height="14" viewBox="0 0 16 14"><rect x="1" y="4" width="13" height="9" rx="2" fill="#fff" /><path d="M15.300 7v3" stroke="#fff" strokeWidth="1.400" /><path d="M4 0v3M7 0v3M2.500 3H8v2a2.500 2.500 0 0 1-5.500 0z" stroke="#fff" fill="#fff" /></svg></TrayIcon>
      <Clock><span>4:22 PM<br />5/2/2024</span></Clock>
      <TrayIcon $w={30} aria-label="Notifications"><svg width="14" height="16" viewBox="0 0 14 16" fill="#ff9e7a"><path d="M7 0a5 5 0 0 1 5 5v4l2 3.500H0L2 9V5a5 5 0 0 1 5-5zM5 13.500h4a2 2 0 0 1-4 0z" /></svg></TrayIcon>
      <Gap $w={6} />
      <TrayIcon $w={32} aria-label="Copilot">
        <svg width="26" height="24" viewBox="0 0 26 24">
          <defs><linearGradient id="cpa" x1="0" y1="0" x2="0" y2="1"><stop stopColor="#2b8ff0" /><stop offset="1" stopColor="#5ac466" /></linearGradient><linearGradient id="cpb" x1="0" y1="0" x2="0" y2="1"><stop stopColor="#a05cf0" /><stop offset="1" stopColor="#f58a5a" /></linearGradient></defs>
          <path d="M9 1h7l-4 15c-.6 2-2 3-4 3H4c-3 0-4-2-3.200-5L4 4c.6-2 2-3 5-3z" fill="url(#cpa)" />
          <path d="M16 3h3c3 0 4.500 2 3.800 5L20 17c-.6 2-2 3-4 3h-5c1.500-1 2-3 2.500-5z" fill="url(#cpb)" />
          <rect x="6" y="15" width="19" height="9" rx="2" fill="#ffd335" /><text x="15.500" y="22.500" fontSize="8" fontWeight="700" fill="#222" textAnchor="middle">PRE</text>
        </svg>
      </TrayIcon>
    </Tray>
  </Bar>
);

export default function App() {
  return (
    <>
      <GlobalStyle />
      <Desktop>
        <Windows><DioWindow /><PdfWindow /></Windows>
        <Taskbar />
      </Desktop>
    </>
  );
}
